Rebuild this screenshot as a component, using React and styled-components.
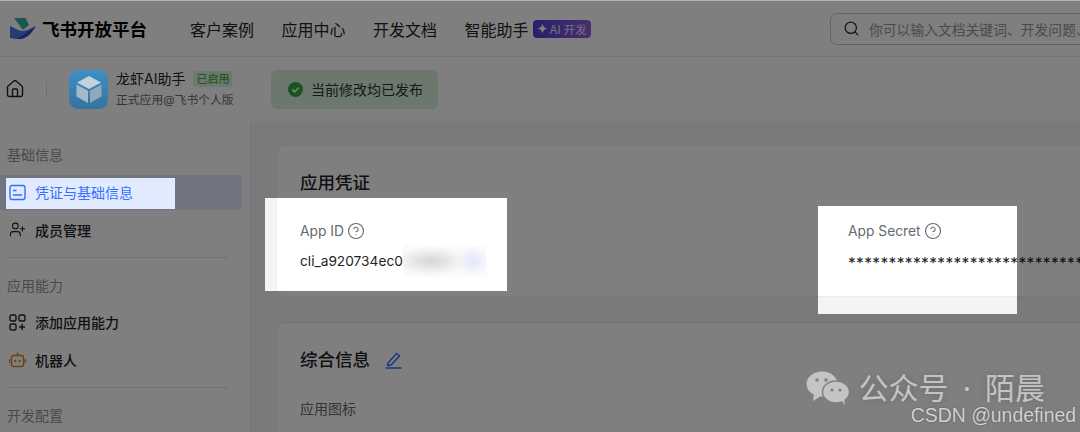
import React from 'react';
import styled, {createGlobalStyle} from 'styled-components';
import {Search, Home, CircleHelp, UserPlus} from 'lucide-react';

const sans = `Inter, "Noto Sans CJK SC", sans-serif`;

const Global = createGlobalStyle`
  html, body {
    margin: 0;
    padding: 0;
    background: #808080;
  }
  * {
    box-sizing: border-box;
  }
`;

// the screenshot's three spotlights, cut out of the dimming layer
const holes = 'M0 0H1080V431H0Z M265 197H507V290H265Z M818 205H1017V313H818Z M6 177H175V208H6Z';

const App = () => (
  <Page>
    <Global/>
    <Header>
      <Brand>
        <svg width="26" height="21" viewBox="0 0 26 21">
          <path d="M4 0H15.5L19 7L13 12Z" fill="#33b39b"/>
          <path d="M0 8C4 9.5 8 12.5 12 13C17 13 21 10 26 8C23 13 18 21 9 21C4 21 2 20.500 0 20Z" fill="#4a78e8"/>
          <path d="M7 20.800C12 18 18 14 25 8.800C22 14 17 21 9 21Z" fill="#2a48b8"/>
        </svg>
        <BrandName>飞书开放平台</BrandName>
      </Brand>
      <Nav>
        <NavItem>客户案例</NavItem>
        <NavItem>应用中心</NavItem>
        <NavItem>开发文档</NavItem>
        <NavItem>
          智能助手
          <AiBadge>
            <svg width="11" height="11" viewBox="0 0 11 11">
              <path d="M5.500 0C6 3.500 7.500 5 11 5.500C7.500 6 6 7.500 5.500 11C5 7.500 3.500 6 0 5.500C3.500 5 5 3.500 5.500 0Z" fill="#fff"/>
            </svg>
            AI 开发
          </AiBadge>
        </NavItem>
      </Nav>
      <SearchBox>
        <Search size={17} color="#2b2f36" strokeWidth={1.8}/>
        <SearchHint>你可以输入文档关键词、开发问题、</SearchHint>
      </SearchBox>
    </Header>

    <SubHeader>
      <Home size={20} color="#1f2329" strokeWidth={1.7}/>
      <VLine/>
      <AppIcon>
        <svg width="30" height="30" viewBox="0 0 30 30">
          <path d="M15 2L27 8.500L15 15L3 8.500Z" fill="#c3d2dd"/>
          <path d="M2.500 10.500L14 16.800V29L2.500 22.500Z" fill="#a3b9c9"/>
          <path d="M27.500 10.500L16 16.800V29L27.500 22.500Z" fill="#8fa9bc"/>
        </svg>
      </AppIcon>
      <AppMeta>
        <AppTitle>龙虾AI助手<StatusTag>已启用</StatusTag></AppTitle>
        <AppKind>正式应用@飞书个人版</AppKind>
      </AppMeta>
      <PublishedPill>
        <svg width="15" height="15" viewBox="0 0 15 15">
          <circle cx="7.500" cy="7.500" r="7.500" fill="#32a645"/>
          <path d="M4.300 7.600L6.600 9.900L10.800 5.600" fill="none" stroke="#fff" strokeWidth="1.500"/>
        </svg>
        当前修改均已发布
      </PublishedPill>
    </SubHeader>

    <Body>
      <Sidebar>
        <GroupLabel>基础信息</GroupLabel>
        <MenuRow $active>
          <svg width="17" height="17" viewBox="0 0 17 17" fill="none" stroke="#3370ff" strokeWidth="1.400">
            <rect x="1" y="1.500" width="15" height="14" rx="2"/>
            <path d="M4 6.500H7.500M4 11H13"/>
          </svg>
          凭证与基础信息
        </MenuRow>
        <MenuRow>
          <UserPlus size={17} color="#1f2329" strokeWidth={1.500}/>
          成员管理
        </MenuRow>
        <Divider/>
        <GroupLabel $tight>应用能力</GroupLabel>
        <MenuRow>
          <svg width="17" height="17" viewBox="0 0 17 17" fill="none" stroke="#1f2329" strokeWidth="1.400">
            <rect x="1" y="1" width="6" height="6" rx="1.500"/>
            <rect x="10" y="1" width="6" height="6" rx="1.500"/>
            <rect x="1" y="10" width="6" height="6" rx="1.500"/>
            <path d="M13 10V16M10 13H16"/>
          </svg>
          添加应用能力
        </MenuRow>
        <MenuRow>
          <svg width="17" height="17" viewBox="0 0 17 17" fill="none" stroke="#d9832a" strokeWidth="1.400">
            <rect x="2.500" y="4.500" width="12" height="11" rx="2"/>
            <path d="M8.500 4.500V1.500M0.700 8V12M16.300 8V12"/>
            <circle cx="6.300" cy="10" r=".5" fill="#d9832a"/>
            <circle cx="10.700" cy="10" r=".5" fill="#d9832a"/>
          </svg>
          机器人
        </MenuRow>
        <Divider/>
        <GroupLabel>开发配置</GroupLabel>
      </Sidebar>

      <Main>
        <Card $height={152}>
          <CardTitle>应用凭证</CardTitle>
          <Fields>
            <Field>
              <FieldLabel>App ID<CircleHelp size={18} strokeWidth={1.500}/></FieldLabel>
              <FieldValue>cli_a920734ec0<Blurred/></FieldValue>
            </Field>
            <Field>
              <FieldLabel>App Secret<CircleHelp size={18} strokeWidth={1.500}/></FieldLabel>
              <Stars>{'*'.repeat(29)}</Stars>
            </Field>
          </Fields>
        </Card>
        <Card $height={140}>
          <CardTitle>
            综合信息
            <svg width="17" height="18" viewBox="0 0 17 18" fill="none" stroke="#3370ff" strokeWidth="1.500">
              <path d="M3 12L11.500 2.500L14.500 5L6 14L2.800 14.500Z"/>
              <path d="M0.500 17H16.500"/>
            </svg>
          </CardTitle>
          <PlainLabel>应用图标</PlainLabel>
        </Card>
      </Main>
    </Body>

    <Dim/>

    <Watermark>
      <WatermarkLine>
        <svg width="44" height="34" viewBox="0 0 44 34" fill="#c4c4c4">
          <ellipse cx="16" cy="13" rx="15.500" ry="12.500"/>
          <path d="M8 22L7 30L15 25Z"/>
          <ellipse cx="30" cy="21" rx="13.500" ry="11" stroke="#808080" strokeWidth="1.500"/>
          <path d="M36 30L39 34L38 27Z"/>
          <circle cx="11" cy="9" r="1.800" fill="#808080"/>
          <circle cx="20" cy="9" r="1.800" fill="#808080"/>
          <circle cx="26" cy="19" r="1.600" fill="#808080"/>
          <circle cx="34" cy="19" r="1.600" fill="#808080"/>
        </svg>
        <WatermarkName>公众号 · 陌晨</WatermarkName>
      </WatermarkLine>
      <WatermarkSite>CSDN @undefined</WatermarkSite>
    </Watermark>
  </Page>
);

export default App;

const Page = styled.div`
  position: relative;
  width: 1080px;
  height: 432px;
  overflow: hidden;
  background: #fff;
  border-top: 1px solid #b4b4b4;
  font-family: ${sans};
  color: #1f2329;
`;

const Dim = styled.div`
  position: absolute;
  inset: 0;
  z-index: 1;
  background: rgba(0, 0, 0, 0.5);
  clip-path: path(evenodd, '${holes}');
`;

const Header = styled.header`
  display: flex;
  align-items: center;
  height: 56px;
  padding-left: 10px;
  border-bottom: 1px solid #e8e9eb;
`;

const Brand = styled.div`
  display: flex;
  align-items: center;
  gap: 6px;
  width: 180px;
  flex: none;
`;

const BrandName = styled.span`
  font-size: 17.5px;
  font-weight: 700;
  color: #000;
`;

const Nav = styled.nav`
  display: flex;
  gap: 27.5px;
  flex: none;
  width: 640px;
`;

const NavItem = styled.span`
  display: flex;
  align-items: center;
  gap: 4px;
  font-size: 16px;
  white-space: nowrap;
`;

const AiBadge = styled.span`
  display: flex;
  align-items: center;
  gap: 2px;
  height: 18px;
  padding: 0 4px;
  border-radius: 4px;
  background: linear-gradient(90deg, #4f3fd8, #9060d8);
  color: #e4e0ff;
  font-size: 11.5px;
`;

const SearchBox = styled.div`
  display: flex;
  align-items: center;
  gap: 9px;
  flex: none;
  width: 300px;
  height: 32px;
  padding-left: 12px;
  border: 1px solid #c5c8cc;
  border-radius: 7px;
`;

const SearchHint = styled.span`
  font-size: 13.8px;
  color: #8f959e;
  white-space: nowrap;
`;

const SubHeader = styled.div`
  display: flex;
  align-items: center;
  height: 64px;
  padding-left: 5px;
`;

const VLine = styled.span`
  width: 1px;
  height: 16px;
  margin: 0 22px 0 21px;
  background: #dfe1e4;
`;

// brighter than the dimming allows in the picture, so it sits over the layer
const AppIcon = styled.span`
  position: relative;
  z-index: 2;
  display: flex;
  align-items: center;
  justify-content: center;
  width: 39px;
  height: 39px;
  border-radius: 9px;
  background: linear-gradient(180deg, #3f8fc6, #35739f);
`;

const AppMeta = styled.div`
  display: flex;
  flex-direction: column;
  gap: 4px;
  width: 155px;
  margin-left: 8px;
`;

const AppTitle = styled.div`
  display: flex;
  align-items: center;
  gap: 8px;
  font-size: 14px;
  line-height: 18px;
`;

const StatusTag = styled.span`
  padding: 0 3px;
  border-radius: 3px;
  background: #d9f2dd;
  color: #2ea121;
  font-size: 11px;
  line-height: 16px;
`;

const AppKind = styled.div`
  font-size: 11.8px;
  line-height: 16px;
  color: #646a73;
`;

const PublishedPill = styled.div`
  display: flex;
  align-items: center;
  gap: 8px;
  width: 167px;
  height: 39px;
  padding-left: 17px;
  border-radius: 6px;
  background: #d9f0dc;
  font-size: 14px;
  color: #2b2f36;
`;

const Body = styled.div`
  display: flex;
  height: 311px;
  background: #f3f4f6;
`;

const Sidebar = styled.aside`
  flex: none;
  width: 251px;
  padding: 22.5px 8px 0 0;
  background: #fff;
  border-right: 1px solid #e8e9eb;
`;

const GroupLabel = styled.div`
  padding-left: 7px;
  margin-bottom: ${({$tight}) => ($tight ? 8 : 9.5)}px;
  font-size: 14px;
  line-height: 22px;
  color: #8f959e;
`;

const MenuRow = styled.div`
  display: flex;
  align-items: center;
  gap: 9px;
  height: 35px;
  margin-bottom: 2.5px;
  padding: 0 0 1px 9px;
  border-radius: 0 4px 4px 0;
  font-size: 14px;
  font-weight: ${({$active}) => ($active ? 400 : 500)};
  background: ${({$active}) => ($active ? '#e1eaff' : 'transparent')};
  color: ${({$active}) => ($active ? '#3370ff' : '#1f2329')};
`;

const Divider = styled.div`
  width: 220px;
  height: 1px;
  margin: 9.5px 0 17px 7px;
  background: #e0e1e4;
`;

const Main = styled.main`
  flex: 1;
  min-width: 0;
  padding: 24px 0 0 25px;
`;

const Card = styled.section`
  width: 900px;
  height: ${({$height}) => $height}px;
  margin-bottom: 25px;
  padding: 24.5px 23px 0;
  border-radius: 8px;
  background: #fff;
  border: 1px solid #eceded;
`;

const CardTitle = styled.h2`
  display: flex;
  align-items: center;
  gap: 15px;
  margin: 0;
  font-size: 17.5px;
  font-weight: 500;
  line-height: 24px;
`;

const Fields = styled.div`
  display: flex;
  margin-top: 26.5px;
`;

const Field = styled.div`
  width: 548px;
  flex: none;
`;

const FieldLabel = styled.div`
  display: flex;
  align-items: center;
  gap: 3px;
  font-size: 13.8px;
  line-height: 20px;
  color: #646a73;
`;

const FieldValue = styled.div`
  display: flex;
  align-items: center;
  margin-top: 10px;
  font-size: 13.7px;
  line-height: 20px;
  white-space: nowrap;
`;

const Stars = styled(FieldValue)`
  margin-top: 13px;
  font-size: 15.5px;
  letter-spacing: 0.35px;
`;

const Blurred = styled.span`
  width: 84px;
  height: 32px;
  margin: -6px 0;
  background:
    radial-gradient(ellipse 16px 14px at 70px 50%, #e2e7fb, transparent),
    radial-gradient(ellipse 36px 14px at 28px 50%, #d6d6d6, transparent),
    #fafafa;
`;

const PlainLabel = styled.div`
  margin-top: 27.5px;
  font-size: 14px;
  line-height: 20px;
  color: #646a73;
`;

const Watermark = styled.div`
  position: absolute;
  right: 4px;
  top: 370px;
  z-index: 2;
  display: flex;
  flex-direction: column;
  align-items: flex-end;
`;

const WatermarkLine = styled.div`
  display: flex;
  align-items: center;
  gap: 8px;
  margin-right: 31px;
`;

const WatermarkName = styled.span`
  font-size: 30px;
  line-height: 34px;
  word-spacing: 5.5px;
  color: #c4c4c4;
  text-shadow: 0 0 6px rgba(0, 0, 0, 0.2);
`;

const WatermarkSite = styled.span`
  font-family: "Liberation Sans", sans-serif;
  font-size: 19.4px;
  line-height: 20px;
  color: #d2d2d2;
  text-shadow: 0 0 2px rgba(0, 0, 0, 0.4);
`;
